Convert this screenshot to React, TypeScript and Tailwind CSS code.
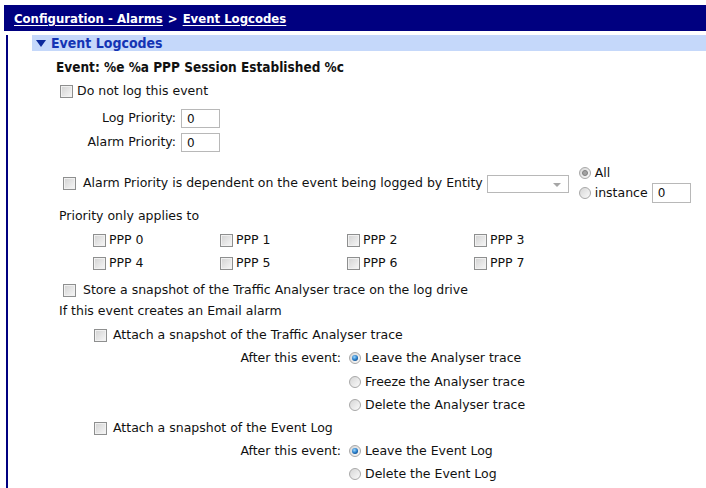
function Check() {
  return (
    <span className="inline-block w-[13px] h-[13px] shrink-0 border border-[#8e8f8f] bg-gradient-to-br from-[#d2d2d2] to-[#f7f7f7] shadow-[inset_0_0_0_1px_#f1f1f1]" />
  );
}

function Radio({ on = false, grey = false }: { on?: boolean; grey?: boolean }) {
  return (
    <span className="inline-flex w-[12px] h-[12px] shrink-0 rounded-full border border-[#a8a8a8] bg-gradient-to-br from-[#d6d6d6] to-[#fbfbfb] items-center justify-center">
      {on && (
        <span
          className={
            grey
              ? "w-[6px] h-[6px] rounded-full bg-[#a2a2a2] border border-[#808080]"
              : "w-[6px] h-[6px] rounded-full bg-[radial-gradient(circle_at_40%_35%,#9ad8ff,#1f74c2_55%,#0a2a55)]"
          }
        />
      )}
    </span>
  );
}

function Box({ w, h = "h-[19px]", value = "" }: { w: string; h?: string; value?: string }) {
  return (
    <span className={`inline-flex items-center ${h} ${w} shrink-0 border border-[#b8b8b8] bg-white pl-[5px] text-[12px]`}>
      {value}
    </span>
  );
}

function Ppp({ n }: { n: number }) {
  return (
    <div className="w-[127px] flex items-center gap-[3px]">
      <Check />
      <span className="pt-[1px]">PPP {n}</span>
    </div>
  );
}

function Opt({ on = false, label }: { on?: boolean; label: string }) {
  return (
    <div className="flex items-center gap-[4px]">
      <Radio on={on} />
      <span className="pt-[1px]">{label}</span>
    </div>
  );
}

export default function App() {
  return (
    <div className="w-[706px] h-[488px] overflow-hidden bg-white text-[12.5px] text-[#111] font-['DejaVu_Sans',sans-serif] leading-none">
      <div className="ml-[4px] mt-[5px] h-[26px] bg-[#000080] pl-[10px] flex items-center text-white font-bold text-[13px] font-['DejaVu_Sans_Condensed','DejaVu_Sans',sans-serif]">
        <span className="underline underline-offset-2">Configuration - Alarms</span>
        <span className="mx-[5px]">&gt;</span>
        <span className="underline underline-offset-2">Event Logcodes</span>
      </div>

      <div className="ml-[6px] mt-[4px] border-l-2 border-[#000080] h-[460px]">
        <div className="ml-[24px] h-[16px] bg-[#c5d8fa] flex items-center pl-[4px] gap-[5px] text-[#1434b4] font-bold text-[14px] font-['DejaVu_Sans_Condensed','DejaVu_Sans',sans-serif]">
          <svg width="10" height="7" viewBox="0 0 10 7" className="mt-[1px]">
            <path d="M0 0H10L5 7Z" fill="#0d2a9c" />
          </svg>
          <span>Event Logcodes</span>
        </div>

        <div className="pl-[52px]">
          <div className="mt-[7px] h-[20px] flex items-center -ml-[4px] font-bold text-[13.5px] font-['DejaVu_Sans_Condensed','DejaVu_Sans',sans-serif]">
            Event: %e %a PPP Session Established %c
          </div>

          <div className="mt-[3px] h-[20px] flex items-center gap-[4px]">
            <Check />
            <span className="pt-[1px]">Do not log this event</span>
          </div>

          <div className="mt-[8px] flex items-center h-[19px]">
            <span className="w-[121px] text-right pr-[5px]">Log Priority:</span>
            <Box w="w-[39px]" value="0" />
          </div>
          <div className="mt-[5px] flex items-center h-[19px]">
            <span className="w-[121px] text-right pr-[5px]">Alarm Priority:</span>
            <Box w="w-[39px]" value="0" />
          </div>

          <div className="mt-[15px] h-[36px] flex items-start">
            <div className="mt-[6px] h-[20px] ml-[3px] flex items-center gap-[7px]">
              <Check />
              <span className="pt-[1px]">Alarm Priority is dependent on the event being logged by Entity</span>
            </div>
            <span className="ml-[4px] mt-[8px] relative inline-block w-[82px] h-[18px] border border-[#b8b8b8] bg-white">
              <span className="absolute right-[7px] top-[7px] w-0 h-0 border-x-[4px] border-x-transparent border-t-[4px] border-t-[#a6a6a6]" />
            </span>
            <div className="ml-[10px] flex flex-col">
              <div className="h-[12px] flex items-center gap-[4px]">
                <Radio on grey />
                <span>All</span>
              </div>
              <div className="mt-[4px] h-[20px] flex items-center gap-[4px]">
                <Radio />
                <span>instance</span>
                <Box w="w-[39px]" h="h-[20px]" value="0" />
              </div>
            </div>
          </div>

          <div className="mt-[3px] h-[20px] flex items-center -ml-[1px]">Priority only applies to</div>

          <div className="mt-[4px] ml-[33px] flex h-[20px] items-center">
            <Ppp n={0} /><Ppp n={1} /><Ppp n={2} /><Ppp n={3} />
          </div>
          <div className="mt-[3px] ml-[33px] flex h-[20px] items-center">
            <Ppp n={4} /><Ppp n={5} /><Ppp n={6} /><Ppp n={7} />
          </div>

          <div className="mt-[7px] h-[20px] ml-[3px] flex items-center gap-[7px]">
            <Check />
            <span className="pt-[1px]">Store a snapshot of the Traffic Analyser trace on the log drive</span>
          </div>

          <div className="mt-[1px] h-[20px] flex items-center -ml-[1px] pt-[1px]">If this event creates an Email alarm</div>

          <div className="mt-[4px] h-[20px] ml-[34px] flex items-center gap-[6px]">
            <Check />
            <span className="pt-[1px]">Attach a snapshot of the Traffic Analyser trace</span>
          </div>

          <div className="mt-[3px] h-[20px] flex items-center">
            <span className="w-[289px] text-right pr-[8px] pt-[1px]">After this event:</span>
            <Opt on label="Leave the Analyser trace" />
          </div>
          <div className="mt-[4px] h-[20px] flex items-center pl-[289px]">
            <Opt label="Freeze the Analyser trace" />
          </div>
          <div className="mt-[3px] h-[20px] flex items-center pl-[289px]">
            <Opt label="Delete the Analyser trace" />
          </div>

          <div className="mt-[3px] h-[20px] ml-[34px] flex items-center gap-[6px]">
            <Check />
            <span className="pt-[1px]">Attach a snapshot of the Event Log</span>
          </div>

          <div className="mt-[3px] h-[20px] flex items-center">
            <span className="w-[289px] text-right pr-[8px] pt-[1px]">After this event:</span>
            <Opt on label="Leave the Event Log" />
          </div>
          <div className="mt-[3px] h-[20px] flex items-center pl-[289px]">
            <Opt label="Delete the Event Log" />
          </div>
        </div>
      </div>
    </div>
  );
}
